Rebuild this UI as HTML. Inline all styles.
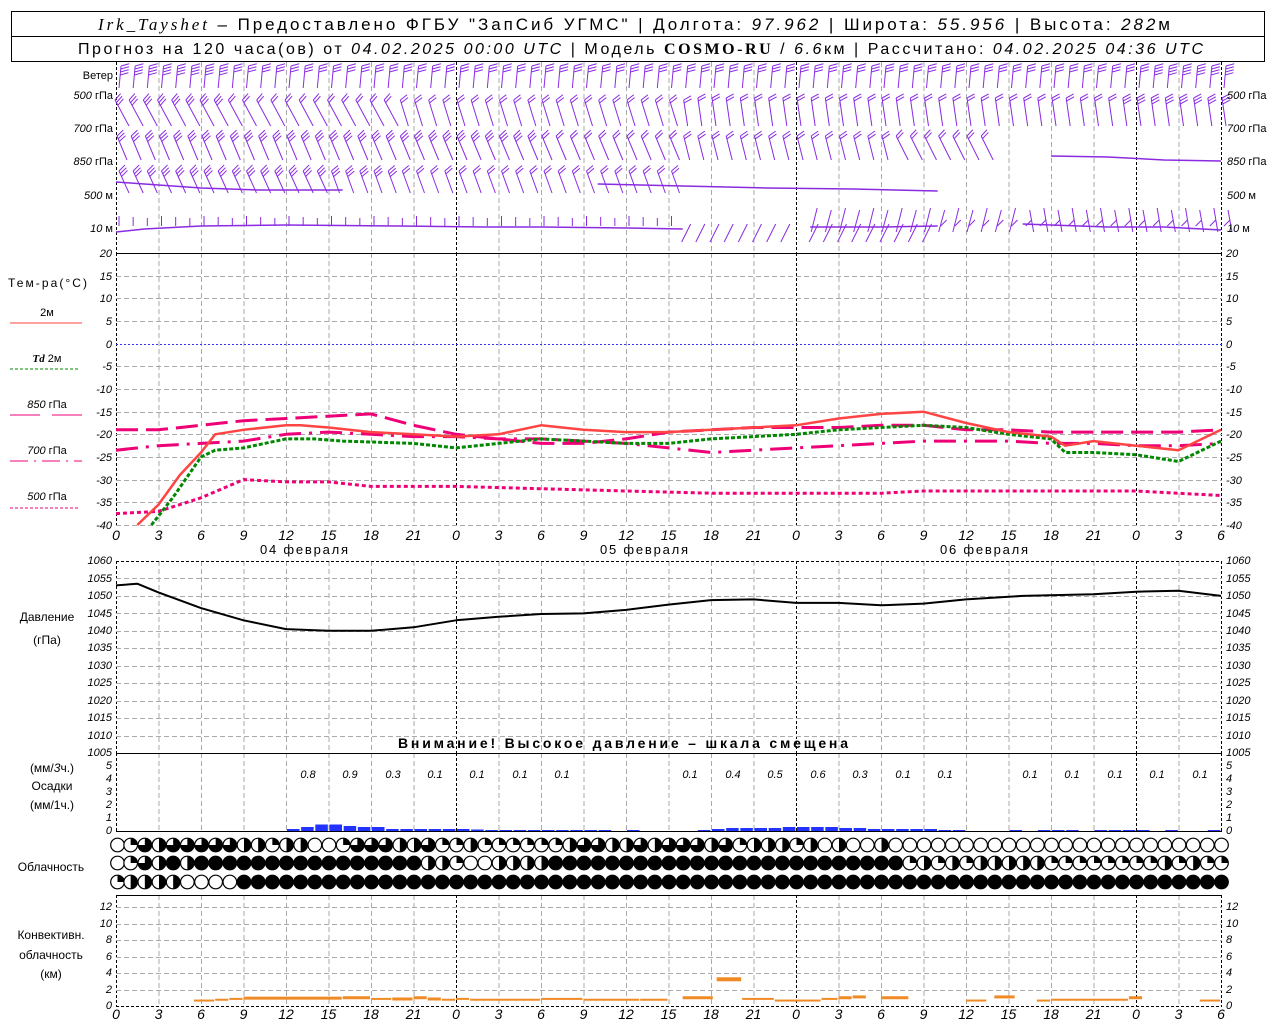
<!DOCTYPE html>
<html><head><meta charset="utf-8">
<style>
html,body{margin:0;padding:0;background:#fff;}
body{width:1280px;height:1024px;overflow:hidden;position:relative;font-family:"Liberation Sans","DejaVu Sans",sans-serif;}
svg{position:absolute;left:0;top:0;}
.t{font-family:"Liberation Sans","DejaVu Sans",sans-serif;fill:#000;}
.ax{font-family:"Liberation Sans",sans-serif;font-style:italic;font-size:11px;fill:#000;}
.hx{font-family:"Liberation Sans",sans-serif;font-style:italic;font-size:14px;fill:#000;}
</style></head><body>
<svg id="s" width="1280" height="1024" xmlns="http://www.w3.org/2000/svg">
<rect x="11.5" y="11.5" width="1253" height="50" fill="none" stroke="#000"/>
<line x1="11" y1="36.5" x2="1265" y2="36.5" stroke="#000"/>
<text class="t" x="98" y="30" font-size="17" textLength="1072" lengthAdjust="spacing"><tspan font-family="Liberation Serif" font-style="italic">Irk_Tayshet</tspan> – Предоставлено ФГБУ "ЗапСиб УГМС" | Долгота: <tspan font-style="italic">97.962</tspan> | Широта: <tspan font-style="italic">55.956</tspan> | Высота: <tspan font-style="italic">282</tspan>м</text>
<text class="t" x="78" y="54" font-size="16" textLength="1125" lengthAdjust="spacing">Прогноз на 120 часа(ов) от <tspan font-style="italic">04.02.2025 00:00 UTC</tspan> | Модель <tspan font-family="Liberation Serif" font-weight="bold">COSMO-RU</tspan> / <tspan font-style="italic">6.6</tspan>км | Рассчитано: <tspan font-style="italic">04.02.2025 04:36 UTC</tspan></text>
<g id="grid"></g>
<g id="data"></g>
<g class="t" font-size="11">
<text x="113" y="79" text-anchor="end">Ветер</text>
<text x="113" y="99" text-anchor="end"><tspan font-style="italic">500</tspan> гПа</text>
<text x="113" y="132" text-anchor="end"><tspan font-style="italic">700</tspan> гПа</text>
<text x="113" y="165" text-anchor="end"><tspan font-style="italic">850</tspan> гПа</text>
<text x="113" y="199" text-anchor="end"><tspan font-style="italic">500</tspan> м</text>
<text x="113" y="232" text-anchor="end"><tspan font-style="italic">10</tspan>   м</text>
<text x="1227" y="99"><tspan font-style="italic">500</tspan> гПа</text>
<text x="1227" y="132"><tspan font-style="italic">700</tspan> гПа</text>
<text x="1227" y="165"><tspan font-style="italic">850</tspan> гПа</text>
<text x="1227" y="199"><tspan font-style="italic">500</tspan> м</text>
<text x="1227" y="232"><tspan font-style="italic">10</tspan>   м</text>
</g>
<g class="t" font-size="12">
<text x="8" y="287" textLength="79" lengthAdjust="spacing">Тем-ра(°С)</text>
<text x="47" y="316" text-anchor="middle" font-size="11">2м</text>
<text x="47" y="362" text-anchor="middle" font-size="11"><tspan font-style="italic" font-weight="bold" font-family="Liberation Serif">Td</tspan>  2м</text>
<text x="47" y="408" text-anchor="middle" font-size="11"><tspan font-style="italic">850</tspan> гПа</text>
<text x="47" y="454" text-anchor="middle" font-size="11"><tspan font-style="italic">700</tspan> гПа</text>
<text x="47" y="500" text-anchor="middle" font-size="11"><tspan font-style="italic">500</tspan> гПа</text>
<text x="47" y="621" text-anchor="middle">Давление</text>
<text x="47" y="644" text-anchor="middle">(гПа)</text>
<text x="52" y="772" text-anchor="middle">(мм/<tspan font-style="italic">3</tspan>ч.)</text>
<text x="52" y="790" text-anchor="middle">Осадки</text>
<text x="52" y="809" text-anchor="middle">(мм/1ч.)</text>
<text x="51" y="871" text-anchor="middle">Облачность</text>
<text x="51" y="939" text-anchor="middle">Конвективн.</text>
<text x="51" y="959" text-anchor="middle">облачность</text>
<text x="51" y="978" text-anchor="middle">(км)</text>
<text x="398" y="748" font-size="14" font-weight="bold" textLength="450" lengthAdjust="spacing">Внимание! Высокое давление – шкала смещена</text>
</g>
<line x1="10" y1="323" x2="82" y2="323" stroke="#f44" stroke-width="1"/>
<line x1="10" y1="369" x2="80" y2="369" stroke="#080" stroke-dasharray="3,2"/>
<line x1="10" y1="415" x2="40" y2="415" stroke="#e07" /><line x1="52" y1="415" x2="82" y2="415" stroke="#e07"/>
<line x1="10" y1="461" x2="82" y2="461" stroke="#e07" stroke-dasharray="18,6,2,6"/>
<line x1="10" y1="508" x2="80" y2="508" stroke="#e07" stroke-dasharray="3,2"/>
<text class="hx" y="540" text-anchor="middle"><tspan x="116">0</tspan><tspan x="158.5">3</tspan><tspan x="201">6</tspan><tspan x="243.5">9</tspan><tspan x="286">12</tspan><tspan x="328.5">15</tspan><tspan x="371">18</tspan><tspan x="413.5">21</tspan><tspan x="456">0</tspan><tspan x="498.5">3</tspan><tspan x="541">6</tspan><tspan x="583.5">9</tspan><tspan x="626">12</tspan><tspan x="668.5">15</tspan><tspan x="711">18</tspan><tspan x="753.5">21</tspan><tspan x="796">0</tspan><tspan x="838.5">3</tspan><tspan x="881">6</tspan><tspan x="923.5">9</tspan><tspan x="966">12</tspan><tspan x="1008.5">15</tspan><tspan x="1051">18</tspan><tspan x="1093.5">21</tspan><tspan x="1136">0</tspan><tspan x="1178.5">3</tspan><tspan x="1221">6</tspan></text>
<text class="hx" y="1019" text-anchor="middle"><tspan x="116">0</tspan><tspan x="158.5">3</tspan><tspan x="201">6</tspan><tspan x="243.5">9</tspan><tspan x="286">12</tspan><tspan x="328.5">15</tspan><tspan x="371">18</tspan><tspan x="413.5">21</tspan><tspan x="456">0</tspan><tspan x="498.5">3</tspan><tspan x="541">6</tspan><tspan x="583.5">9</tspan><tspan x="626">12</tspan><tspan x="668.5">15</tspan><tspan x="711">18</tspan><tspan x="753.5">21</tspan><tspan x="796">0</tspan><tspan x="838.5">3</tspan><tspan x="881">6</tspan><tspan x="923.5">9</tspan><tspan x="966">12</tspan><tspan x="1008.5">15</tspan><tspan x="1051">18</tspan><tspan x="1093.5">21</tspan><tspan x="1136">0</tspan><tspan x="1178.5">3</tspan><tspan x="1221">6</tspan></text>
<g class="t" font-size="13"><text x="260" y="554" textLength="88" lengthAdjust="spacing">04 февраля</text><text x="600" y="554" textLength="88" lengthAdjust="spacing">05 февраля</text><text x="940" y="554" textLength="88" lengthAdjust="spacing">06 февраля</text></g>
<text class="ax" font-size="10" text-anchor="end"><tspan x="112" y="257">20</tspan><tspan x="112" y="280">15</tspan><tspan x="112" y="302">10</tspan><tspan x="112" y="325">5</tspan><tspan x="112" y="348">0</tspan><tspan x="112" y="370">-5</tspan><tspan x="112" y="393">-10</tspan><tspan x="112" y="416">-15</tspan><tspan x="112" y="438">-20</tspan><tspan x="112" y="461">-25</tspan><tspan x="112" y="484">-30</tspan><tspan x="112" y="506">-35</tspan><tspan x="112" y="529">-40</tspan></text>
<text class="ax" font-size="10"><tspan x="1226" y="257">20</tspan><tspan x="1226" y="280">15</tspan><tspan x="1226" y="302">10</tspan><tspan x="1226" y="325">5</tspan><tspan x="1226" y="348">0</tspan><tspan x="1226" y="370">-5</tspan><tspan x="1226" y="393">-10</tspan><tspan x="1226" y="416">-15</tspan><tspan x="1226" y="438">-20</tspan><tspan x="1226" y="461">-25</tspan><tspan x="1226" y="484">-30</tspan><tspan x="1226" y="506">-35</tspan><tspan x="1226" y="529">-40</tspan></text>
<text class="ax" font-size="9" text-anchor="end"><tspan x="112" y="564">1060</tspan><tspan x="112" y="582">1055</tspan><tspan x="112" y="599">1050</tspan><tspan x="112" y="617">1045</tspan><tspan x="112" y="634">1040</tspan><tspan x="112" y="651">1035</tspan><tspan x="112" y="669">1030</tspan><tspan x="112" y="686">1025</tspan><tspan x="112" y="704">1020</tspan><tspan x="112" y="721">1015</tspan><tspan x="112" y="739">1010</tspan><tspan x="112" y="756">1005</tspan></text>
<text class="ax" font-size="9"><tspan x="1226" y="564">1060</tspan><tspan x="1226" y="582">1055</tspan><tspan x="1226" y="599">1050</tspan><tspan x="1226" y="617">1045</tspan><tspan x="1226" y="634">1040</tspan><tspan x="1226" y="651">1035</tspan><tspan x="1226" y="669">1030</tspan><tspan x="1226" y="686">1025</tspan><tspan x="1226" y="704">1020</tspan><tspan x="1226" y="721">1015</tspan><tspan x="1226" y="739">1010</tspan><tspan x="1226" y="756">1005</tspan></text>
<text class="ax" font-size="9" text-anchor="end"><tspan x="112" y="769">5</tspan><tspan x="112" y="782">4</tspan><tspan x="112" y="795">3</tspan><tspan x="112" y="808">2</tspan><tspan x="112" y="821">1</tspan><tspan x="112" y="834">0</tspan></text>
<text class="ax" font-size="9"><tspan x="1226" y="769">5</tspan><tspan x="1226" y="782">4</tspan><tspan x="1226" y="795">3</tspan><tspan x="1226" y="808">2</tspan><tspan x="1226" y="821">1</tspan><tspan x="1226" y="834">0</tspan></text>
<text class="ax" font-size="13" y="778" text-anchor="middle"><tspan x="308">0.8</tspan><tspan x="350">0.9</tspan><tspan x="393">0.3</tspan><tspan x="435">0.1</tspan><tspan x="477">0.1</tspan><tspan x="520">0.1</tspan><tspan x="562">0.1</tspan><tspan x="690">0.1</tspan><tspan x="733">0.4</tspan><tspan x="775">0.5</tspan><tspan x="818">0.6</tspan><tspan x="860">0.3</tspan><tspan x="903">0.1</tspan><tspan x="945">0.1</tspan><tspan x="1030">0.1</tspan><tspan x="1072">0.1</tspan><tspan x="1115">0.1</tspan><tspan x="1157">0.1</tspan><tspan x="1200">0.1</tspan></text>
<text class="ax" font-size="9" text-anchor="end"><tspan x="112" y="910">12</tspan><tspan x="112" y="927">10</tspan><tspan x="112" y="943">8</tspan><tspan x="112" y="960">6</tspan><tspan x="112" y="976">4</tspan><tspan x="112" y="993">2</tspan><tspan x="112" y="1009">0</tspan></text>
<text class="ax" font-size="9"><tspan x="1226" y="910">12</tspan><tspan x="1226" y="927">10</tspan><tspan x="1226" y="943">8</tspan><tspan x="1226" y="960">6</tspan><tspan x="1226" y="976">4</tspan><tspan x="1226" y="993">2</tspan><tspan x="1226" y="1009">0</tspan></text>
</svg>
<script>
(function(){
var NS="http://www.w3.org/2000/svg";
var G=document.getElementById('grid'),D=document.getElementById('data');
function el(p,n,a){var e=document.createElementNS(NS,n);for(var k in a)e.setAttribute(k,a[k]);p.appendChild(e);return e;}
function X(h){return 116+h*14.1667;}
function line(p,x1,y1,x2,y2,c,w,da){var a={x1:x1,y1:y1,x2:x2,y2:y2,stroke:c,'stroke-width':w||1};if(da)a['stroke-dasharray']=da;return el(p,'line',a);}
var secs=[[62,253],[253,525],[561,753],[753,832],[895,1006]];
secs.forEach(function(s){
 for(var k=1;k<26;k++){var x=X(3*k)+0.5;var day=(k%8==0);line(G,x,s[0],x,s[1],day?'#000':'#aaa',1,day?'3,2':'5,3');}
 line(G,116.5,s[0],116.5,s[1],'#000',1,'3,2');line(G,1221.5,s[0],1221.5,s[1],'#000',1,'3,2');
});
function hgr(y){line(G,116,y,1222,y,'#aaa',1,'5,3');}
for(var v=15;v>=-40;v-=5){var y=Math.round(253+(20-v)*4.533)+0.5; if(v!=0)hgr(y);}
for(var k=1;k<=11;k++)hgr(Math.round(561+k*17.45)+0.5);
for(var k=1;k<=6;k++)hgr(Math.round(1006-k*16.5)+0.5);
line(G,116,344.5,1222,344.5,'#33f',1,'2,2');
line(G,116,253.5,1222,253.5,'#000',1);
line(G,116,561.5,1222,561.5,'#000',1,'3,2');
line(G,116,753.5,1222,753.5,'#000',1);
line(G,116,831.5,1222,831.5,'#000',1);
line(G,116,895.5,1222,895.5,'#000',1);
line(G,116,1006.5,1222,1006.5,'#000',1,'3,2');
function curve(pts,fy,c,w,da){var d='';var s=pts;for(var i=0;i<s.length;i+=2){d+=(i?'L':'M')+X(s[i]).toFixed(1)+','+fy(s[i+1]).toFixed(1);}var a={d:d,fill:'none',stroke:c,'stroke-width':w,'stroke-linejoin':'round'};if(da)a['stroke-dasharray']=da;el(D,'path',a);}
function TY(v){return 253+(20-v)*4.533;}
curve([0,-37.5,3,-37,6,-34,9,-30,12,-30.5,15,-30.5,18,-31.5,21,-31.5,24,-31.5,30,-32,36,-32.5,42,-33,48,-33,54,-33,57,-32.5,60,-32.5,66,-32.5,72,-32.5,78,-33.5],TY,'#e07',3,'4,3');
curve([0,-23.5,3,-22.5,6,-22,9,-21.5,12,-20,15,-19.5,18,-20,21,-20.5,24,-20.5,27,-21,30,-21,33,-21.5,36,-22,39,-23,42,-24,45,-23.5,48,-23,51,-22.5,54,-22,57,-21.5,60,-21.5,63,-21.5,66,-22,69,-22,72,-22.5,75,-22.5,78,-22],TY,'#e07',3,'22,8,3,8');
curve([0,-19,3,-19,6,-18,9,-17,12,-16.5,15,-16,18,-15.5,21,-18,24,-20,27,-21,30,-22,33,-22,36,-21,39,-19.5,42,-19,45,-18.5,48,-18.5,51,-18.5,54,-18,57,-18,60,-19,63,-19,66,-19.5,69,-19.5,72,-19.5,75,-19.5,78,-19],TY,'#e07',3,'22,8');
curve([2.5,-40,4,-34,6,-25,7,-23.5,9,-23,12,-21,14,-21,16,-21.5,21,-22,24,-23,27,-22,30,-21,33,-21.5,36,-22,39,-22,42,-21,45,-20.5,48,-20,51,-19,54,-18.5,57,-18,60,-18.5,63,-20,66,-21,67,-24,69,-24,72,-24.5,75,-26,78,-21.5],TY,'#080',3,'4,2');
curve([1.5,-40,3,-35.5,4.5,-29,6,-24,7,-20,9,-19,12,-18,13,-18,15,-18.5,18,-19.5,21,-20,24,-20.5,27,-20,30,-18,33,-19,36,-19.5,39,-19.5,42,-19,45,-18.5,48,-18,51,-16.5,54,-15.5,57,-15,60,-17.5,63,-19.5,66,-20.5,67,-22.5,69,-21.5,72,-22.5,75,-23.5,78,-19],TY,'#f44',2.5);
function PY(p){return 561+(1060-p)*3.49;}
curve([0,1053,1.5,1053.5,3,1051,6,1046.5,9,1043,12,1040.5,15,1040,18,1040,21,1041,24,1043,27,1044,30,1044.8,33,1045,36,1046,39,1047.5,42,1048.8,45,1049,48,1048,51,1048,54,1047.3,57,1047.8,60,1049,64,1050,69,1050.5,72,1051.2,75,1051.5,78,1050],PY,'#000',2);
var pr={12:2,13:4,14:6.5,15:6.5,16:5,17:4,18:4,19:2,20:2,21:2,22:2,23:2,24:2,25:1.5,26:1,27:1,28:1,29:1,30:1,31:1,32:1,33:1,34:1,36:1,41:1,42:2,43:3,44:3,45:3,46:3,47:4,48:4,49:4,50:4,51:3,52:3,53:2,54:2,55:2,56:2,57:2,58:1,59:1,63:1,65:1,66:1,67:1,69:1,70:1,71:1,72:1,74:1,77:1};
for(var h in pr){h=+h;el(D,'rect',{x:X(h)+1,y:831-pr[h],width:12.5,height:pr[h],fill:'#23f'});}
var cv=[[5.5,7,0.6],[7,8,0.7],[8,9,0.8],[9,16,0.95],[16,18,1.0],[18,19.5,0.8],[19.5,21,0.85],[21,22,1.0],[22,23,0.85],[23,24,0.7],[24,25,0.8],[25,30,0.7],[30,33,0.8],[33,37,0.7],[37,39,0.7],[40,42.2,1.0],[42.4,44.2,3.3],[44.2,46.5,0.8],[46.5,49.8,0.6],[49.8,51,0.8],[51,52,1.0],[52,53,1.1],[54,56,1.0],[60,61.5,0.6],[62,63.5,1.1],[65,66,0.6],[66,71.5,0.7],[71.5,72.5,1.0],[76.5,78,0.6]];
cv.forEach(function(c){var y=1006-c[2]*8.25;el(D,'rect',{x:X(c[0]),y:y-1.5,width:X(c[1])-X(c[0])-1,height:c[2]>2?4:(c[2]>0.8?3:2),fill:'#f08a24'});});
var rows=[
"0132333332212200133"+"32231121111112332232"+"33323122212020"+"02000000000000000000000000",
"0132424"+"444444444444444"+"221002222"+"4444444444444444444444444"+"12121222221111111121211",
"122220000"+"4444444444444444444444444444444444444444444444444444444444444444444444"];
var ys=[845,863,882],r=6.8;
rows.forEach(function(s,ri){for(var h=0;h<79;h++){var t=+s.charAt(h)||0,cx=X(h)+0.5+(h==0?1:0),cy=ys[ri];
 var f=t==4?'#000':'#fff';el(D,'circle',{cx:cx,cy:cy,r:r,fill:f,stroke:'#000','stroke-width':1.2});
 if(t==1)el(D,'path',{d:'M'+cx+','+cy+'L'+cx+','+(cy-r)+'A'+r+','+r+' 0 0 1 '+(cx+r)+','+cy+'Z',fill:'#000'});
 if(t==2)el(D,'path',{d:'M'+cx+','+(cy-r)+'A'+r+','+r+' 0 0 1 '+cx+','+(cy+r)+'Z',fill:'#000'});
 if(t==3)el(D,'path',{d:'M'+cx+','+cy+'L'+cx+','+(cy-r)+'A'+r+','+r+' 0 1 1 '+(cx-r)+','+cy+'Z',fill:'#000'});
}});
var P='#8a2be2';
function barb(x0,y0,x1,y1,n,side){
 line(D,x0,y0,x1,y1,P,1);var dx=x1-x0,dy=y1-y0,L=Math.sqrt(dx*dx+dy*dy),ux=dx/L,uy=dy/L;
 for(var i=0;i<n;i++){var px=x0+ux*i*3,py=y0+uy*i*3;line(D,px,py,px+(-uy*side)*8+ux*-3,py+(ux*side)*8+uy*-3,P,1);}
}
for(var h=0;h<79;h++){var x=X(h)+3;
 barb(x+2,66,x,88,h<8||h>72?4:3,-1);
 barb(x-2+ (h<20?-2:0),100+(h>40?-2:0),x+ (h<20?10:(h<40?6:2)),126,h<8||h>70?3:2,-1);
 if(h<62)barb(x-2,136,x+ (h<40?8:(h<55?4:10)),160,h<30?3:2,-1);
 if(h<40)barb(x,171,x+(h<15?10:8),193,h<20?3:2,-1);
 else if(h>48)line(D,x+4,210-(h%2)*2,x+(h<64?-2:8),232,P,1);
}
curve([0,182,2,184,6,188,10,190,14,190,16,190],function(v){return v;},P,1.5);
curve([34,184,40,186,46,188,52,189,58,191],function(v){return v;},P,1.5);
curve([66,156,70,157,74,160,78,161],function(v){return v;},P,1.5);
curve([0,232,2,229,6,226,12,225,20,226,26,227,30,227,36,228,40,229],function(v){return v;},P,1.5);
curve([49,227,54,227,58,226],function(v){return v;},P,1.5);
curve([64,224,70,227,74,227,78,230],function(v){return v;},P,1.5);
for(var h=0;h<79;h++){var x=X(h)+3;
 if(h<40)line(D,x,226,x,216+(h%3),P,1);
 else if(h<58&&h!=48)line(D,x-4,242,x+5,224,P,1);
 else if(h>=58)line(D,x,226,x+6,220,P,1);
}
})();
</script>
</body></html>
